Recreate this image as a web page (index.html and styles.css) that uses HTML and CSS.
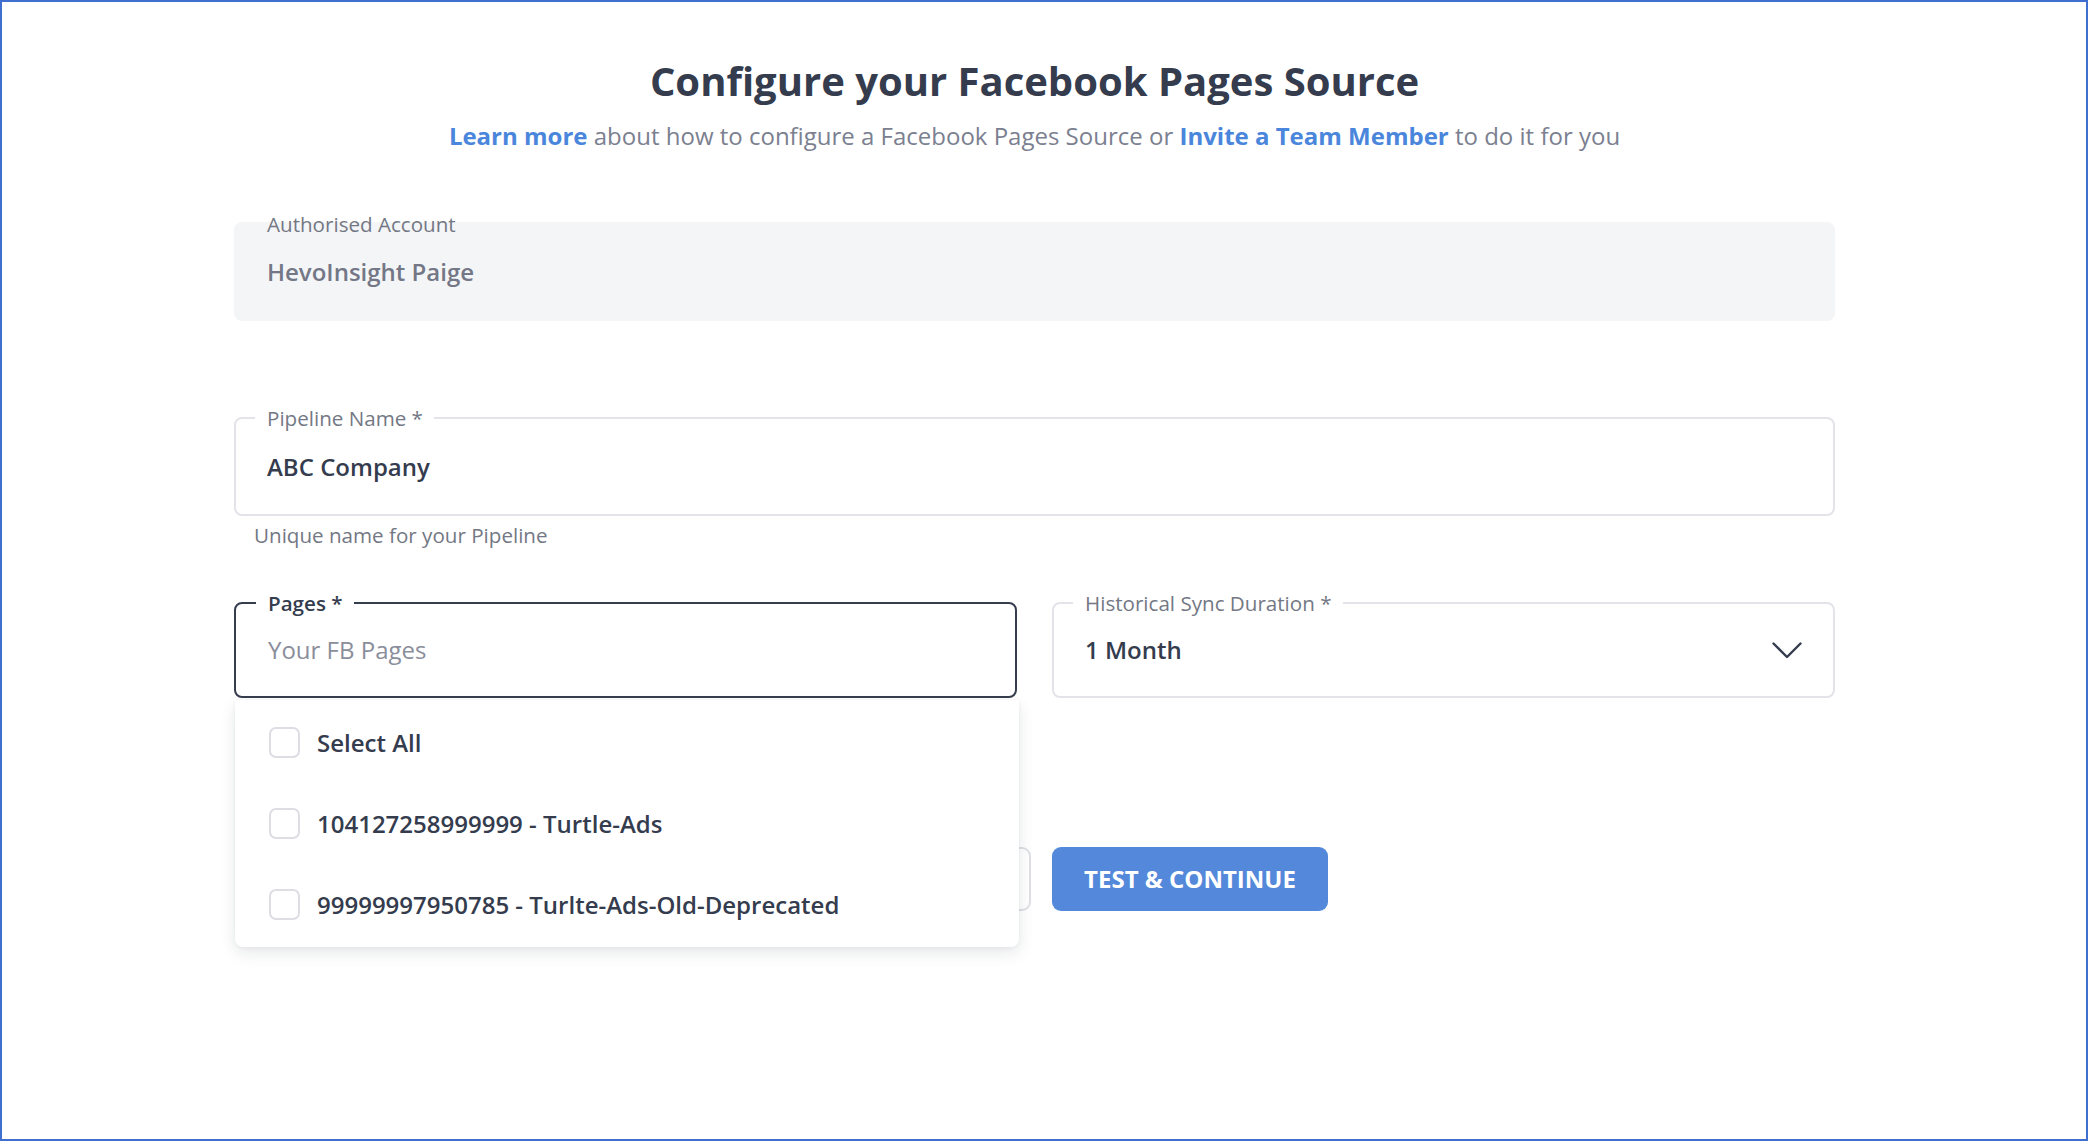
FILE: index.html
```html
<!DOCTYPE html>
<html lang="en">
<head>
<meta charset="utf-8">
<title>Configure your Facebook Pages Source</title>
<link rel="stylesheet" href="styles.css">
</head>
<body>
<div class="frame">
  <main class="content">
    <h1 class="title">Configure your Facebook Pages Source</h1>
    <p class="subtitle"><a class="link" href="#">Learn more</a> about how to configure a Facebook Pages Source or <a class="link" href="#">Invite a Team Member</a> to do it for you</p>

    <div class="readonly-field">
      <span class="field-label plain">Authorised Account</span>
      <span class="readonly-value">HevoInsight Paige</span>
    </div>

    <div class="pipeline-group">
      <div class="field">
        <span class="field-label">Pipeline Name *</span>
        <span class="field-value">ABC Company</span>
      </div>
      <div class="hint">Unique name for your Pipeline</div>
    </div>

    <div class="field-row">
      <div class="pages-col">
        <div class="field field-focused">
          <span class="field-label dark">Pages *</span>
          <span class="placeholder">Your FB Pages</span>
        </div>
        <div class="dropdown">
          <label class="option"><span class="checkbox"></span><span class="option-text">Select All</span></label>
          <label class="option"><span class="checkbox"></span><span class="option-text">104127258999999 - Turtle-Ads</span></label>
          <label class="option"><span class="checkbox"></span><span class="option-text">99999997950785 - Turlte-Ads-Old-Deprecated</span></label>
        </div>
      </div>
      <div class="field field-select">
        <span class="field-label">Historical Sync Duration *</span>
        <span class="field-value">1 Month</span>
        <svg class="chevron" width="30" height="17" viewBox="0 0 30 17" aria-hidden="true">
          <polyline points="1.5,1.5 15,15 28.5,1.5" fill="none" stroke="#343c4e" stroke-width="2.4" stroke-linecap="round" stroke-linejoin="round"/>
        </svg>
      </div>
    </div>

    <div class="actions">
      <button class="btn btn-secondary" type="button">BACK</button>
      <button class="btn btn-primary" type="button">TEST &amp; CONTINUE</button>
    </div>
  </main>
</div>
</body>
</html>
```

FILE: styles.css
```css
* {
  box-sizing: border-box;
}

html, body {
  margin: 0;
  padding: 0;
  background: #ffffff;
}

body {
  font-family: "Open Sans", "Noto Sans", "Liberation Sans", sans-serif;
  color: #343c4e;
}

.frame {
  width: 2088px;
  height: 1141px;
  border: 2px solid #3f6fcf;
  overflow: hidden;
  padding-top: 52px;
}

.content {
  margin-left: 232px;
  width: 1601px;
}

.title {
  margin: 0;
  font-size: 40px;
  line-height: 54px;
  font-weight: 700;
  text-align: center;
  color: #343c4e;
}

.subtitle {
  margin: 12px 0 0;
  font-size: 24px;
  line-height: 32px;
  text-align: center;
  color: #7b8090;
}

.link {
  color: #4a86db;
  font-weight: 700;
  text-decoration: none;
}

/* read-only account box */
.readonly-field {
  position: relative;
  margin-top: 70px;
  height: 99px;
  border-radius: 8px;
  background: #f4f5f7;
  display: flex;
  align-items: center;
  padding-left: 33px;
}

.readonly-value {
  font-size: 24px;
  line-height: 32px;
  font-weight: 600;
  color: #737786;
  padding-top: 0;
}

/* outlined fields */
.field-label {
  position: absolute;
  top: -14px;
  left: 19px;
  padding: 0 11px 0 12px;
  background: #ffffff;
  font-size: 20.6px;
  line-height: 27px;
  font-weight: 500;
  color: #737884;
  white-space: nowrap;
}

.field-label.plain {
  top: -11px;
  left: 21px;
  background: transparent;
}

.field-label.dark {
  color: #343c4e;
  font-weight: 600;
  left: 20px;
}

.pipeline-group {
  margin-top: 96px;
}

.field {
  position: relative;
  height: 99px;
  border: 2px solid #e3e4e9;
  border-radius: 8px;
  display: flex;
  align-items: center;
  padding-left: 31px;
  padding-right: 31px;
}

.field-value {
  font-size: 24px;
  line-height: 32px;
  font-weight: 600;
  color: #343c4e;
}

.placeholder {
  font-size: 24px;
  line-height: 32px;
  font-weight: 400;
  color: #8a8e9b;
}

.hint {
  margin-top: 6px;
  padding-left: 20px;
  font-size: 20.6px;
  line-height: 27px;
  font-weight: 500;
  color: #737884;
}

.field-row {
  margin-top: 53px;
  display: grid;
  grid-template-columns: 783px 783px;
  column-gap: 35px;
}

.field-row .field {
  height: 96px;
}

.field-focused {
  border-color: #353d4f;
  padding-left: 32px;
}

.field-select {
  justify-content: space-between;
}

.chevron {
  display: block;
  flex: none;
}

.pages-col {
  position: relative;
}

.dropdown {
  position: absolute;
  z-index: 10;
  top: calc(100% + 2px);
  left: 1px;
  width: 784px;
  padding: 2px 0;
  background: #ffffff;
  border-radius: 0 0 8px 8px;
  box-shadow: 0 6px 16px rgba(20, 30, 50, 0.10), 0 1px 4px rgba(20, 30, 50, 0.05);
}

.option {
  height: 81px;
  display: flex;
  align-items: center;
  gap: 17px;
  padding-left: 34px;
  cursor: pointer;
}

.checkbox {
  width: 31px;
  height: 31px;
  flex: none;
  border: 2px solid #dddee4;
  border-radius: 7px;
  background: #ffffff;
}

.option-text {
  font-size: 24px;
  line-height: 32px;
  font-weight: 600;
  color: #343c4e;
}

.actions {
  margin-top: 149px;
  display: flex;
  justify-content: center;
  gap: 21px;
  padding-left: 1px;
}

.btn {
  height: 64px;
  border-radius: 9px;
  font-family: "Open Sans", "Noto Sans", "Liberation Sans", sans-serif;
  font-size: 24px;
  font-weight: 700;
  line-height: 32px;
  cursor: pointer;
}

.btn-secondary {
  width: 289px;
  background: #ffffff;
  border: 2px solid #dfe0e6;
  color: #343c4e;
}

.btn-primary {
  width: 276px;
  background: #5388da;
  border: none;
  color: #ffffff;
}
```
